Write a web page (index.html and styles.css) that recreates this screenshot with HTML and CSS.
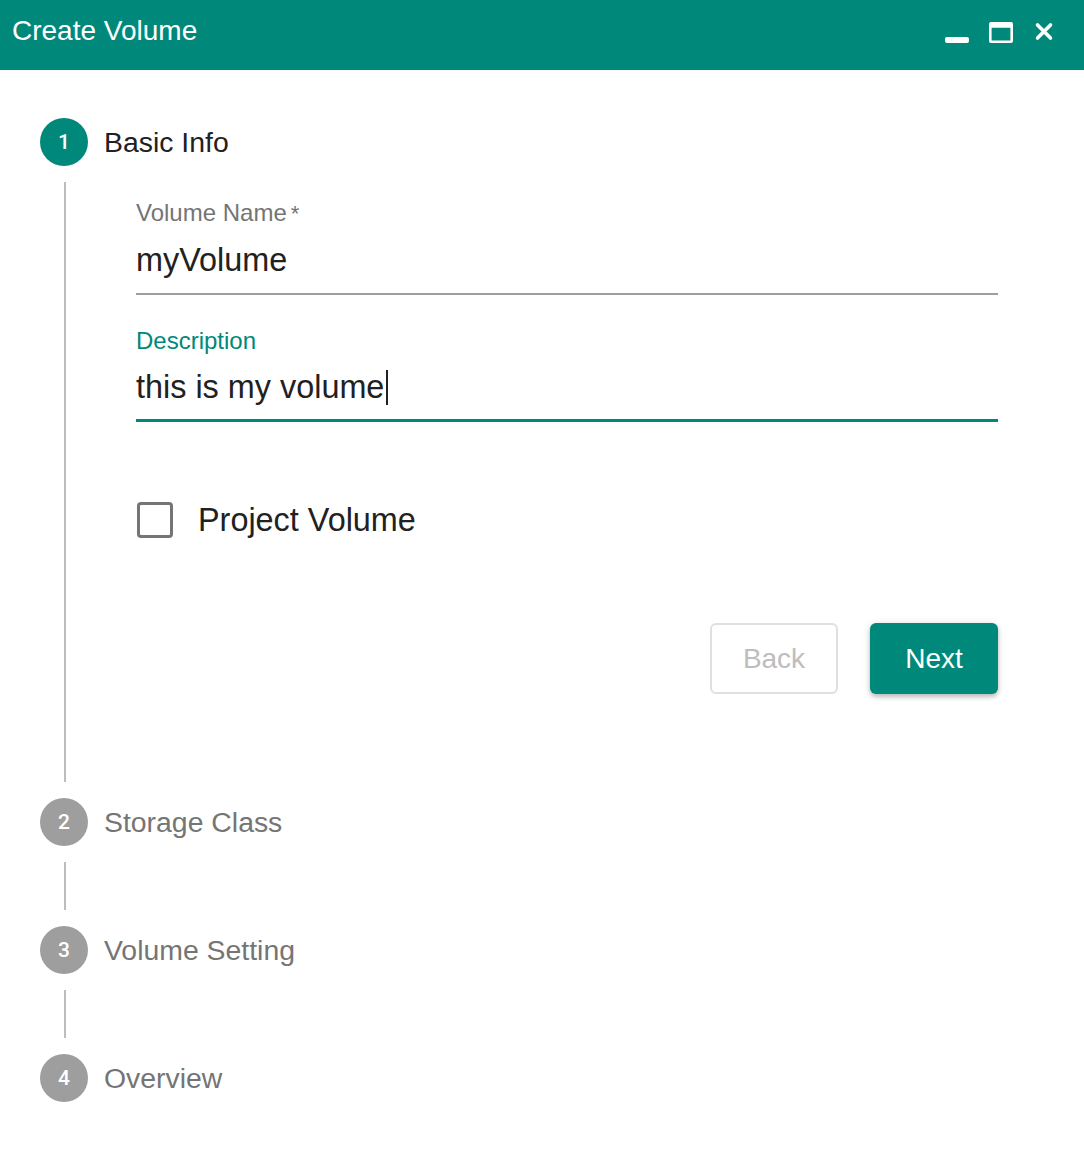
FILE: index.html
```html
<!DOCTYPE html>
<html>
<head>
<meta charset="utf-8">
<link rel="stylesheet" href="styles.css">
</head>
<body>
<header class="titlebar">
  <h1 class="title">Create Volume</h1>
  <div class="win-actions">
    <svg class="ico ico-min" width="26" height="26" viewBox="0 0 26 26"><rect x="1" y="19" width="24" height="6" rx="2" fill="#fff"/></svg>
    <svg class="ico ico-max" width="26" height="26" viewBox="0 0 26 26"><path fill="#fff" fill-rule="evenodd" d="M2 4.5a2 2 0 0 1 2-2h20a2 2 0 0 1 2 2v17a2 2 0 0 1-2 2H4a2 2 0 0 1-2-2zM4.6 8.2v12.7h18.8V8.2z" transform="translate(-1 1.5)"/></svg>
    <svg class="ico ico-close" width="26" height="26" viewBox="0 0 26 26"><path d="M5.5 7l13 13M18.5 7l-13 13" stroke="#fff" stroke-width="3.6" stroke-linecap="round"/></svg>
  </div>
</header>

<main class="stepper">
  <section class="step active">
    <div class="step-head">
      <span class="step-num">1</span>
      <span class="step-label">Basic Info</span>
    </div>
    <div class="step-body">
      <div class="field">
        <label class="field-label">Volume Name<span class="req">*</span></label>
        <div class="field-input">myVolume</div>
      </div>
      <div class="field focused">
        <label class="field-label">Description</label>
        <div class="field-input">this is my volume<span class="caret"></span></div>
      </div>
      <div class="check-row">
        <span class="checkbox"></span>
        <span class="check-label">Project Volume</span>
      </div>
      <div class="actions">
        <button class="btn btn-back">Back</button>
        <button class="btn btn-next">Next</button>
      </div>
    </div>
  </section>

  <section class="step">
    <div class="step-head">
      <span class="step-num">2</span>
      <span class="step-label">Storage Class</span>
    </div>
    <div class="step-connector"></div>
  </section>

  <section class="step">
    <div class="step-head">
      <span class="step-num">3</span>
      <span class="step-label">Volume Setting</span>
    </div>
    <div class="step-connector"></div>
  </section>

  <section class="step">
    <div class="step-head">
      <span class="step-num">4</span>
      <span class="step-label">Overview</span>
    </div>
  </section>
</main>
</body>
</html>
```

FILE: styles.css
```css
* { box-sizing: border-box; }

html, body {
  margin: 0;
  padding: 0;
  background: #ffffff;
  font-family: "Liberation Sans", Arial, Helvetica, sans-serif;
  color: #212121;
}

.titlebar {
  height: 70px;
  background: #00897b;
  display: flex;
  align-items: center;
  justify-content: space-between;
  padding: 0 26px 0 12px;
}

.title {
  margin: 0;
  font-size: 28px;
  font-weight: 400;
  color: #ffffff;
  line-height: 32px;
  position: relative;
  top: -4px;
}

.win-actions {
  display: flex;
  align-items: center;
  gap: 18px;
  position: relative;
  top: -4px;
}

.ico { display: block; }

.stepper {
  padding: 48px 40px 0 40px;
}

.step-head {
  display: flex;
  align-items: center;
  height: 48px;
  gap: 16px;
}

.step-num {
  width: 48px;
  height: 48px;
  border-radius: 50%;
  background: #9e9e9e;
  color: #ffffff;
  font-family: Roboto, "Liberation Sans", Arial, sans-serif;
  font-size: 21px;
  font-weight: 500;
  display: flex;
  align-items: center;
  justify-content: center;
  flex: none;
}

.step.active .step-num { background: #00897b; }

.step-label {
  font-size: 28.4px;
  color: #757575;
  line-height: 32px;
}

.step.active .step-label { color: #212121; }

.step-body {
  margin: 16px 46px 16px 24px;
  border-left: 2px solid #bdbdbd;
  padding: 17px 0 89px 70px;
  height: 600px;
}

.step-connector {
  margin: 16px 0 16px 24px;
  height: 48px;
  border-left: 2px solid #bdbdbd;
}

.field {
  display: flex;
  flex-direction: column;
}

.field + .field { margin-top: 32px; }

.field-label {
  font-size: 24px;
  line-height: 28px;
  color: #757575;
}

.req { margin-left: 4px; font-size: 22px; }

.field.focused .field-label { color: #00897b; }

.field-input {
  margin-top: 12px;
  font-size: 32.4px;
  line-height: 40px;
  color: #212121;
  padding-bottom: 13px;
  border-bottom: 2px solid #9e9e9e;
  display: flex;
  align-items: center;
}

.field.focused .field-input {
  padding-bottom: 12px;
  border-bottom: 3px solid #00897b;
}

.caret {
  display: inline-block;
  width: 2px;
  height: 35px;
  background: #212121;
  margin-left: 2px;
}

.check-row {
  margin-top: 80px;
  display: flex;
  align-items: center;
  height: 36px;
  gap: 25px;
}

.checkbox {
  width: 36px;
  height: 36px;
  border: 3px solid #757575;
  border-radius: 4px;
  margin-left: 1px;
  flex: none;
}

.check-label {
  font-size: 32.4px;
  line-height: 36px;
  color: #212121;
}

.actions {
  margin-top: 85px;
  display: flex;
  justify-content: flex-end;
  gap: 32px;
}

.btn {
  width: 128px;
  height: 71px;
  border-radius: 6px;
  font-family: "Liberation Sans", Arial, sans-serif;
  font-size: 28px;
  padding: 0;
  cursor: pointer;
}

.btn-back {
  background: #ffffff;
  border: 2px solid #e0e0e0;
  color: #bdbdbd;
}

.btn-next {
  background: #00897b;
  border: none;
  color: #ffffff;
  box-shadow: 0 3px 4px rgba(0,0,0,0.2), 0 1px 8px rgba(0,0,0,0.12);
}
```
